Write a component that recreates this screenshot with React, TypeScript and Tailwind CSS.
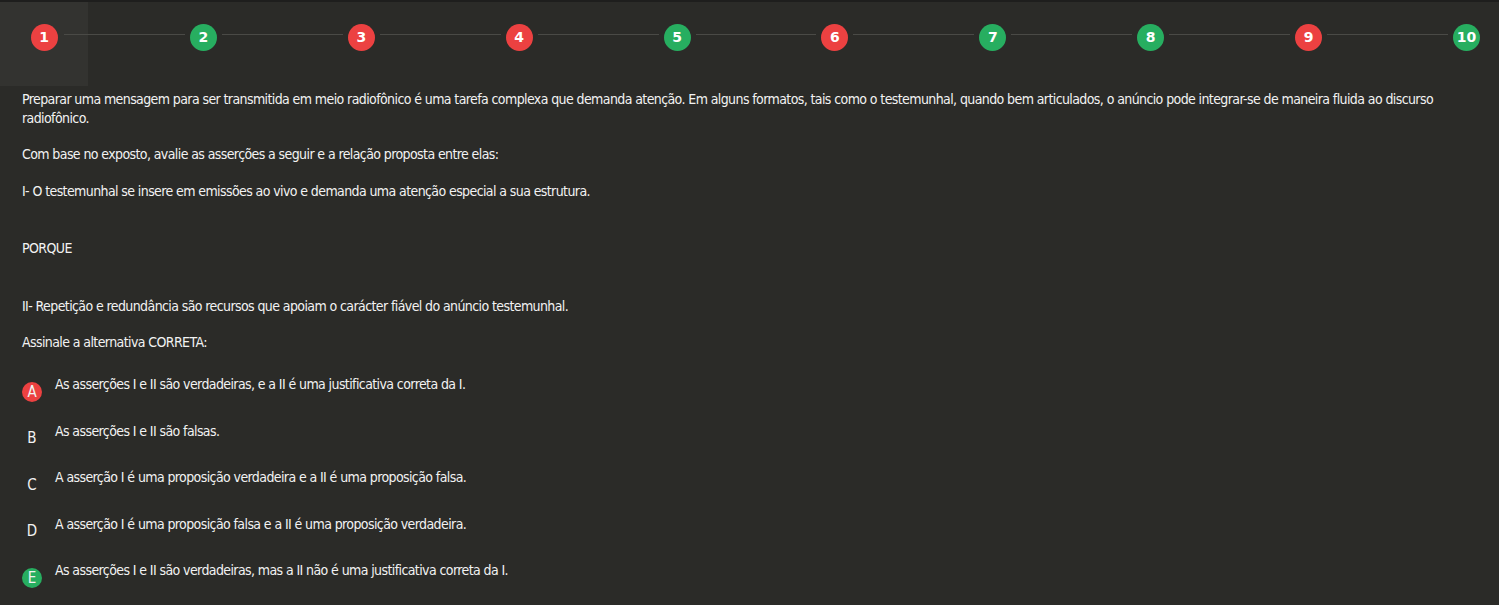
import React from "react";

const steps: { n: number; ok: boolean }[] = [
  { n: 1, ok: false },
  { n: 2, ok: true },
  { n: 3, ok: false },
  { n: 4, ok: false },
  { n: 5, ok: true },
  { n: 6, ok: false },
  { n: 7, ok: true },
  { n: 8, ok: true },
  { n: 9, ok: false },
  { n: 10, ok: true },
];

const options: { l: string; t: string; c?: "red" | "green" }[] = [
  { l: "A", t: "As asserções I e II são verdadeiras, e a II é uma justificativa correta da I.", c: "red" },
  { l: "B", t: "As asserções I e II são falsas." },
  { l: "C", t: "A asserção I é uma proposição verdadeira e a II é uma proposição falsa." },
  { l: "D", t: "A asserção I é uma proposição falsa e a II é uma proposição verdadeira." },
  { l: "E", t: "As asserções I e II são verdadeiras, mas a II não é uma justificativa correta da I.", c: "green" },
];

export default function App() {
  return (
    <div
      className="w-[1499px] h-[605px] bg-[#2b2b28] text-[#f2f2f2] overflow-hidden"
      style={{ fontFamily: '"DejaVu Sans Condensed", "Liberation Sans", sans-serif' }}
    >
      <div className="h-[2px] bg-[#1e1e1d]" />
      <div className="flex items-start h-[84px]">
        {steps.map((s, i) => (
          <React.Fragment key={s.n}>
            <div className={`flex justify-center pt-[22px] h-[84px] ${i === 0 ? "w-[88px] bg-[#333330]" : "w-[27px]"}`}>
              <div
                className={`w-[27px] h-[27px] rounded-full flex items-center justify-center text-white font-bold text-[14px] ${
                  s.ok ? "bg-[#27ae60]" : "bg-[#ec4141]"
                }`}
                style={{ fontFamily: '"DejaVu Sans", sans-serif' }}
              >
                {s.n}
              </div>
            </div>
            {i < steps.length - 1 && (
              <div className={`flex-1 h-[1px] bg-[#4a4a46] mt-[32px] ${i === 0 ? "mr-[5px] ml-[-24px]" : "mx-[5px]"}`} />
            )}
          </React.Fragment>
        ))}
        <div className="w-[19px]" />
      </div>
      <div className="pl-[22px] pr-[22px] pt-[4px] text-[14px] leading-[19px] tracking-[-0.6px]">
        <p className="mb-[17px]">
          Preparar uma mensagem para ser transmitida em meio radiofônico é uma tarefa complexa que demanda atenção. Em alguns formatos, tais como o testemunhal, quando bem articulados, o anúncio pode integrar-se de maneira fluida ao discurso radiofônico.
        </p>
        <p className="mb-[18px]">Com base no exposto, avalie as asserções a seguir e a relação proposta entre elas:</p>
        <p className="mb-[38px]">I- O testemunhal se insere em emissões ao vivo e demanda uma atenção especial a sua estrutura.</p>
        <p className="mb-[39px]">PORQUE</p>
        <p className="mb-[17px]">II- Repetição e redundância são recursos que apoiam o carácter fiável do anúncio testemunhal.</p>
        <p className="mb-[23px]">Assinale a alternativa CORRETA:</p>
        <div className="flex flex-col gap-[27.5px]">
          {options.map((o) => (
            <div key={o.l} className="flex items-start">
              <div
                className={`w-[20px] h-[20px] mt-[-2px] rounded-full flex items-center justify-center text-[15px] tracking-normal translate-y-[9px] ${
                  o.c === "red" ? "bg-[#ec4141]" : o.c === "green" ? "bg-[#27ae60]" : ""
                }`}
              >
                {o.l}
              </div>
              <div className="ml-[13px]">{o.t}</div>
            </div>
          ))}
        </div>
      </div>
    </div>
  );
}
